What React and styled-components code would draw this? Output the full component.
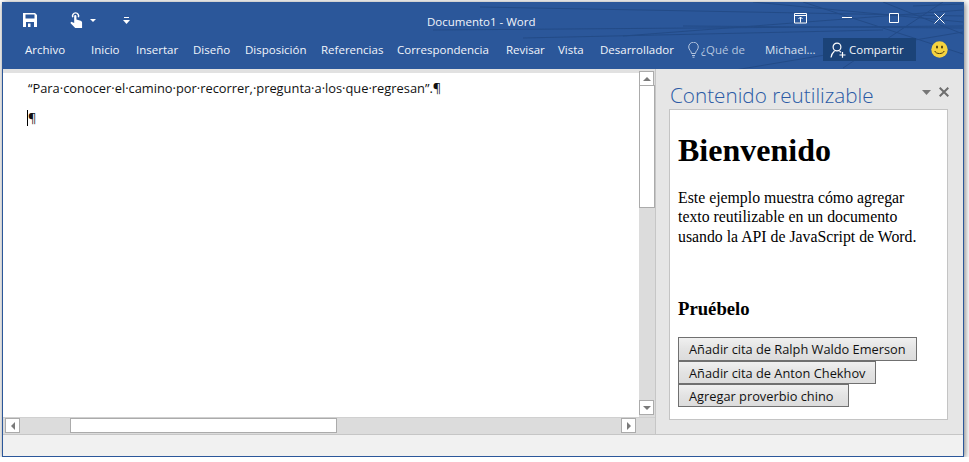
import React from "react";
import styled, { createGlobalStyle } from "styled-components";

const Global = createGlobalStyle`
  html, body { margin: 0; padding: 0; background: #fff; }
  body { font-family: "Open Sans", "Noto Sans", sans-serif; }
  * { box-sizing: border-box; }
`;

const BLUE = "#2b579a";

const Window = styled.div`
  margin: 2px 0 0 2px;
  width: 962px;
  height: 455px;
  display: flex;
  flex-direction: column;
  border: 1px solid ${BLUE};
  border-top: 0;
  box-shadow: 1px 1px 6px rgba(0, 0, 0, 0.55);
  background: #f1f1f1;
`;

/**
 * TITLE BAR
 */

const TitleBar = styled.header`
  position: relative;
  height: 67px;
  flex: none;
  background: ${BLUE};
  color: #fff;
  overflow: hidden;
`;

const Pattern = styled.svg`
  position: absolute;
  top: 0;
  right: 0;
`;

const TopRow = styled.div`
  position: relative;
  height: 32px;
  display: flex;
  align-items: center;
`;

const QuickAccess = styled.div`
  display: flex;
  align-items: center;
  padding: 4px 0 0 20px;
`;

const QuickButton = styled.span`
  display: flex;
  align-items: center;
  gap: 7px;
  width: ${(p) => p.$w}px;
`;

const DocTitle = styled.div`
  position: absolute;
  left: 424px;
  top: 12px;
  font-size: 11.5px;
  line-height: 16px;
  color: #f2f5fa;
`;

const WinButtons = styled.div`
  margin-left: auto;
  display: flex;
  align-items: center;
  padding-right: 1px;
`;

const WinButton = styled.span`
  display: flex;
  justify-content: center;
  width: ${(p) => p.$w}px;
`;

const TabRow = styled.nav`
  position: relative;
  height: 35px;
  display: flex;
  align-items: center;
  padding: 0 0 4px 22px;
`;

const Tab = styled.span`
  width: ${(p) => p.$w}px;
  flex: none;
  font-size: 11.5px;
  line-height: 16px;
  white-space: nowrap;
  color: ${(p) => (p.$dim ? "#d8e0ee" : "#f2f5fa")};
`;

const TellMe = styled.span`
  display: flex;
  align-items: center;
  gap: 2px;
  width: 77px;
  flex: none;
  font-size: 11.5px;
  color: #b4c5df;
`;

const ShareButton = styled.span`
  display: flex;
  align-items: center;
  gap: 3px;
  width: 93px;
  height: 23px;
  padding-left: 7px;
  flex: none;
  font-size: 11.5px;
  background: #1b4378;
  color: #f2f5fa;
`;

const Smiley = styled.span`
  display: flex;
  margin-left: 15px;
`;

/**
 * DOCUMENT
 */

const Body = styled.div`
  flex: 1;
  min-height: 0;
  display: flex;
`;

const DocArea = styled.main`
  flex: 1;
  min-width: 0;
  display: flex;
  flex-direction: column;
  background: #e1e1e1;
  padding-top: 4px;
`;

const DocRow = styled.div`
  flex: 1;
  min-height: 0;
  display: flex;
`;

const Page = styled.div`
  flex: 1;
  background: #fff;
  padding: 6px 0 0 25px;
  font-size: 12.87px;
  line-height: 18px;
  color: #111;
`;

const EmptyPara = styled.div`
  position: relative;
  margin-top: 12px;
`;

const Caret = styled.span`
  position: absolute;
  left: -1px;
  top: 1px;
  width: 1px;
  height: 16px;
  background: #000;
`;

const VScroll = styled.div`
  width: 16px;
  flex: none;
  margin-top: -2px;
  padding-bottom: 2px;
  display: flex;
  flex-direction: column;
  background: #dcdcdc;
`;

const HScroll = styled.div`
  height: 17px;
  flex: none;
  display: flex;
  align-items: center;
  padding: 0 19px 1px 2px;
  background: #dcdcdc;
  border-top: 1px solid #d0d0d0;
`;

const ScrollButton = styled.span`
  width: 15px;
  height: 15px;
  flex: none;
  display: flex;
  align-items: center;
  justify-content: center;
  background: #fff;
  border: 1px solid #ababab;
`;

const Thumb = styled.span`
  display: block;
  flex: none;
  background: #fff;
  border: 1px solid #ababab;
  ${(p) => (p.$vertical ? "height: 123px; margin-top: -1px;" : "width: 267px; height: 15px; margin-left: 50px;")}
`;

const Spacer = styled.span`
  flex: 1;
`;

/**
 * TASK PANE
 */

const TaskPane = styled.aside`
  width: 308px;
  flex: none;
  display: flex;
  flex-direction: column;
  background: #e6e6e6;
  border-left: 1px solid #c6c6c6;
  padding: 0 15px 14px 13px;
`;

const PaneHead = styled.div`
  height: 40px;
  flex: none;
  display: flex;
  align-items: flex-end;
  justify-content: space-between;
`;

const PaneTitle = styled.h2`
  margin: 0 0 -1px 1px;
  font-family: "Open Sans", sans-serif;
  font-weight: 300;
  font-size: 20.7px;
  line-height: 30px;
  color: #2a5aa5;
`;

const PaneControls = styled.span`
  display: flex;
  align-items: center;
  gap: 8px;
  margin: 0 -1px 12px 0;
`;

const PaneContent = styled.div`
  flex: 1;
  background: #fff;
  border: 1px solid #c4c4c4;
  padding: 0 9px 0 8px;
  font-family: "Liberation Serif", "Times New Roman", serif;
  color: #000;
`;

const Welcome = styled.h1`
  margin: 22px 0 0;
  font-size: 32px;
  line-height: 37px;
  font-weight: bold;
`;

const Intro = styled.p`
  margin: 19px 0 0;
  font-size: 15.8px;
  line-height: 19.4px;
  width: 245px;
`;

const TryIt = styled.h3`
  margin: 52px 0 0;
  font-size: 18.7px;
  line-height: 22px;
  font-weight: bold;
`;

const ButtonStack = styled.div`
  margin-top: 17px;
  display: flex;
  flex-direction: column;
  align-items: flex-start;
`;

const QuoteButton = styled.button`
  width: ${(p) => p.$w}px;
  height: ${(p) => p.$h || 23}px;
  padding: 0 0 0 10px;
  text-align: left;
  white-space: nowrap;
  border: 1px solid #707070;
  border-radius: 0;
  background: linear-gradient(#f0f0f0, #e3e3e3 50%, #dcdcdc);
  font-family: "Open Sans", "Noto Sans", sans-serif;
  font-size: 12.8px;
  line-height: 16px;
  color: #111;
`;

const StatusBar = styled.footer`
  height: 22px;
  flex: none;
  background: #f1f1f1;
  border-top: 1px solid #c6c6c6;
`;

/**
 * ICONS
 */

const SaveIcon = () => (
  <svg width="14" height="14" viewBox="0 0 14 14">
    <path d="M0 0h12l2 2v12H0z" fill="#fff" />
    <path d="M2.5 1.5h9v4h-9z" fill="#2b579a" />
    <path d="M3 9h8v5H3z" fill="#2b579a" />
    <path d="M5 10.5h2.5V14H5z" fill="#fff" />
  </svg>
);

const TouchIcon = () => (
  <svg width="13" height="16" viewBox="0 0 14 17">
    <path d="M3 5.5a3.3 3.3 0 1 1 6 0" fill="none" stroke="#fff" strokeWidth="1.6" />
    <path
      d="M4.5 4.4a1.2 1.2 0 0 1 2.4 0V8l4.5 1.2c1 .3 1.6 1 1.6 2V17H5.6L.4 11.6l1-1.2 3.1 1.4z"
      fill="#fff"
    />
  </svg>
);

const Caret5 = ({ fill = "#fff", w = 7, h = 4 }) => (
  <svg width={w} height={h} viewBox="0 0 7 4" preserveAspectRatio="none">
    <path d="M0 0h7L3.5 4z" fill={fill} />
  </svg>
);

const CustomizeIcon = () => (
  <svg width="7" height="7" viewBox="0 0 7 7">
    <path d="M1 0h5v1H1z" fill="#fff" />
    <path d="M0 3h7L3.5 7z" fill="#fff" />
  </svg>
);

const RestoreIcon = () => (
  <svg width="13" height="11" viewBox="0 0 13 11" fill="none" stroke="#fff">
    <path d="M.5.5h12v9.5H.5zM.5 2.5h12M6.5 9.5V4M4.5 6l2-2 2 2" />
  </svg>
);

const MinimizeIcon = () => (
  <svg width="10" height="10" viewBox="0 0 10 10" fill="none" stroke="#fff">
    <path d="M0 4.5h10" />
  </svg>
);

const MaximizeIcon = () => (
  <svg width="10" height="10" viewBox="0 0 10 10" fill="none" stroke="#fff">
    <path d="M.5.5h9v9h-9z" />
  </svg>
);

const CloseIcon = () => (
  <svg width="11" height="11" viewBox="0 0 11 11" fill="none" stroke="#fff">
    <path d="M.5.5l10 10M10.5.5l-10 10" />
  </svg>
);

const BulbIcon = () => (
  <svg width="11" height="16" viewBox="0 0 11 16" fill="none" stroke="#b4c5df">
    <path d="M3.5 11.5C3.5 9 .7 8 .7 5a4.8 4.8 0 0 1 9.6 0c0 3-2.8 4-2.8 6.5zM4 13.5h3M4.5 15.2h2" />
  </svg>
);

const PersonIcon = () => (
  <svg width="16" height="16" viewBox="0 0 16 16" fill="none" stroke="#fff" strokeWidth="1.2">
    <circle cx="7" cy="5" r="3.9" />
    <path d="M1 15.5c.3-3.2 1.8-5 3.5-6.5M9.5 9.2c.5.3 1 .7 1.4 1.2M9.5 13h6M12.5 10v5.8" />
  </svg>
);

const SmileyIcon = () => (
  <svg width="17" height="17" viewBox="0 0 17 17">
    <circle cx="8.5" cy="8.5" r="8.2" fill="#f5d33f" />
    <ellipse cx="6" cy="6" rx="1" ry="1.6" fill="#4a3c10" />
    <ellipse cx="11" cy="6" rx="1" ry="1.6" fill="#4a3c10" />
    <path d="M3.8 10c1 3.4 8.4 3.4 9.4 0" fill="none" stroke="#4a3c10" />
  </svg>
);

const PaneCloseIcon = () => (
  <svg width="10" height="10" viewBox="0 0 10 10" fill="none" stroke="#6e6e6e" strokeWidth="2">
    <path d="M.7.7l8.6 8.6M9.3.7L.7 9.3" />
  </svg>
);

const Arrow = ({ dir }) => {
  const paths = {
    up: "M0 4L4 0l4 4z",
    down: "M0 0h8L4 4z",
    left: "M4 0v8L0 4z",
    right: "M0 0l4 4-4 4z",
  };
  const box = dir === "up" || dir === "down" ? [8, 4] : [4, 8];
  return (
    <svg width={box[0]} height={box[1]} viewBox={`0 0 ${box[0]} ${box[1]}`}>
      <path d={paths[dir]} fill="#7a7a7a" />
    </svg>
  );
};

const streaks = [
  "M157 5L640 14",
  "M110 28L640 24",
  "M300 34L640 8",
  "M400 70L640 30",
  "M560 0L640 32",
  "M480 0L640 52",
  "M620 0L520 66",
  "M590 4L640 2",
  "M200 36L560 28",
  "M360 24L640 26",
  "M430 0L640 20",
];

const TABS = [
  ["Archivo", 66],
  ["Inicio", 45],
  ["Insertar", 57],
  ["Diseño", 52],
  ["Disposición", 76],
  ["Referencias", 76],
  ["Correspondencia", 109],
  ["Revisar", 52],
  ["Vista", 42],
  ["Desarrollador", 88],
];

export default function App() {
  return (
    <>
      <Global />
      <Window>
        <TitleBar>
          <Pattern width="640" height="67" viewBox="0 0 640 67">
            {streaks.map((d) => (
              <path key={d} d={d} stroke="#234b87" strokeWidth="1" fill="none" />
            ))}
          </Pattern>
          <TopRow>
            <QuickAccess>
              <QuickButton $w={47}>
                <SaveIcon />
              </QuickButton>
              <QuickButton $w={53}>
                <TouchIcon />
                <Caret5 w={6} h={3} />
              </QuickButton>
              <QuickButton $w={8}>
                <CustomizeIcon />
              </QuickButton>
            </QuickAccess>
            <DocTitle>Documento1 - Word</DocTitle>
            <WinButtons>
              <WinButton $w={45}>
                <RestoreIcon />
              </WinButton>
              <WinButton $w={47}>
                <MinimizeIcon />
              </WinButton>
              <WinButton $w={47}>
                <MaximizeIcon />
              </WinButton>
              <WinButton $w={45}>
                <CloseIcon />
              </WinButton>
            </WinButtons>
          </TopRow>
          <TabRow>
            {TABS.map(([label, w]) => (
              <Tab key={label} $w={w}>
                {label}
              </Tab>
            ))}
            <TellMe>
              <BulbIcon />
              ¿Qué de
            </TellMe>
            <Tab $w={58} $dim>
              Michael...
            </Tab>
            <ShareButton>
              <PersonIcon />
              Compartir
            </ShareButton>
            <Smiley>
              <SmileyIcon />
            </Smiley>
          </TabRow>
        </TitleBar>
        <Body>
          <DocArea>
            <DocRow>
              <Page>
                “Para·conocer·el·camino·por·recorrer,·pregunta·a·los·que·regresan”.¶
                <EmptyPara>
                  <Caret />¶
                </EmptyPara>
              </Page>
              <VScroll>
                <ScrollButton>
                  <Arrow dir="up" />
                </ScrollButton>
                <Thumb $vertical />
                <Spacer />
                <ScrollButton>
                  <Arrow dir="down" />
                </ScrollButton>
              </VScroll>
            </DocRow>
            <HScroll>
              <ScrollButton>
                <Arrow dir="left" />
              </ScrollButton>
              <Thumb />
              <Spacer />
              <ScrollButton>
                <Arrow dir="right" />
              </ScrollButton>
            </HScroll>
          </DocArea>
          <TaskPane>
            <PaneHead>
              <PaneTitle>Contenido reutilizable</PaneTitle>
              <PaneControls>
                <Caret5 fill="#777" w={9} h={5} />
                <PaneCloseIcon />
              </PaneControls>
            </PaneHead>
            <PaneContent>
              <Welcome>Bienvenido</Welcome>
              <Intro>
                Este ejemplo muestra cómo agregar texto reutilizable en un documento usando la API
                de JavaScript de Word.
              </Intro>
              <TryIt>Pruébelo</TryIt>
              <ButtonStack>
                <QuoteButton $w={239} $h={24}>
                  Añadir cita de Ralph Waldo Emerson
                </QuoteButton>
                <QuoteButton $w={198}>Añadir cita de Anton Chekhov</QuoteButton>
                <QuoteButton $w={171}>Agregar proverbio chino</QuoteButton>
              </ButtonStack>
            </PaneContent>
          </TaskPane>
        </Body>
        <StatusBar />
      </Window>
    </>
  );
}
